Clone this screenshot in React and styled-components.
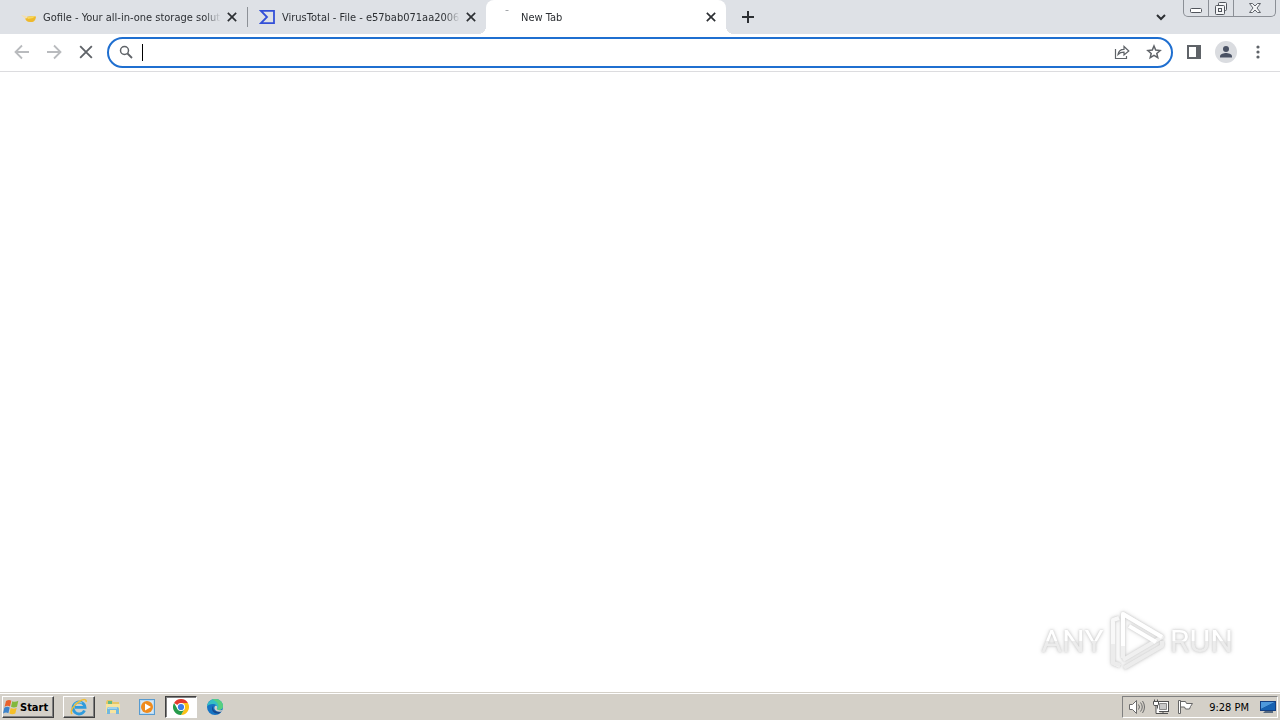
import React from 'react';
import styled, { createGlobalStyle, css } from 'styled-components';

const GlobalStyle = createGlobalStyle`
  * {
    box-sizing: border-box;
  }

  body {
    margin: 0;
    background: #fff;
    font-family: 'DejaVu Sans Condensed', 'DejaVu Sans', Verdana, sans-serif;
    font-size: 11px;
  }

  button {
    margin: 0;
    padding: 0;
    border: none;
    background: none;
    color: inherit;
    font: inherit;
  }

  svg {
    display: block;
    flex: none;
  }
`;

const Desktop = styled.div`
  display: flex;
  flex-direction: column;
  min-height: 100vh;
`;

/* tab strip */

const TabStrip = styled.header`
  display: flex;
  height: 34px;
  padding: 0 4px 0 8px;
  background: #dee1e6;
  color: #2c2f33;
`;

const TabList = styled.div`
  display: flex;
  flex: 0 1 718px;
  min-width: 0;
`;

const Tab = styled.div`
  position: relative;
  display: flex;
  flex: 0 1 ${props => (props.$active ? '240px' : '239px')};
  align-items: center;
  min-width: 0;
  padding: 0 7px 0 12px;
  ${props => props.$divider && css`
    background: linear-gradient(#8d9197, #8d9197) left center / 1px 20px no-repeat;
  `}
  ${props => props.$active && css`
    border-radius: 8px 8px 0 0;
    background: #fff;

    &::before,
    &::after {
      content: '';
      position: absolute;
      bottom: 0;
      width: 8px;
      height: 8px;
    }

    &::before {
      right: 100%;
      background: radial-gradient(circle at 0 0, transparent 8px, #fff 8px);
    }

    &::after {
      left: 100%;
      background: radial-gradient(circle at 100% 0, transparent 8px, #fff 8px);
    }
  `}
`;

const TabTitle = styled.button`
  display: flex;
  flex: 1;
  align-items: center;
  gap: 7px;
  min-width: 0;
  height: 100%;
`;

const TabText = styled.span`
  flex: 1;
  overflow: hidden;
  padding-top: 2px;
  line-height: 16px;
  text-align: left;
  white-space: nowrap;
  mask-image: linear-gradient(to left, transparent, #000 16px);
`;

const TabClose = styled.button`
  display: flex;
  align-items: center;
  justify-content: center;
  width: 16px;
  height: 16px;
  margin-left: 3px;
`;

const StripButton = styled.button`
  display: flex;
  align-items: center;
  justify-content: center;
  width: 28px;
  height: 34px;
  margin-left: ${props => (props.$end ? 'auto' : '8px')};
`;

const WindowControls = styled.div`
  display: flex;
  height: 17px;
  margin-left: 8px;
  border: 1px solid #8b8f96;
  border-top: none;
  border-radius: 0 0 5px 5px;
`;

const WindowButton = styled.button`
  display: flex;
  align-items: center;
  justify-content: center;
  width: ${props => (props.$wide ? '42px' : '25px')};

  &:first-child {
    width: 24px;
  }

  & + & {
    border-left: 1px solid #8b8f96;
  }
`;

/* toolbar */

const Toolbar = styled.nav`
  display: flex;
  align-items: center;
  height: 38px;
  padding: 0 6px;
  border-bottom: 1px solid #dcdcdf;
  background: #fff;
`;

const ToolButton = styled.button`
  display: flex;
  align-items: center;
  justify-content: center;
  width: 32px;
  height: 27px;
  padding-bottom: 1px;
  color: ${props => (props.disabled ? '#b9bbbe' : '#5f6368')};
`;

const Omnibox = styled.div`
  display: flex;
  flex: 1;
  align-items: center;
  height: 31px;
  margin: 0 5px;
  padding: 0 1px 0 8px;
  border: 2px solid #1f6fd0;
  border-radius: 16px;
`;

const SearchBadge = styled.span`
  padding-bottom: 1px;
`;

const Address = styled.input`
  flex: 1;
  min-width: 0;
  height: 17px;
  margin-left: 7px;
  padding: 0;
  border: none;
  border-left: 1px solid #000;
  outline: none;
  background: none;
  font: inherit;
`;

/* page */

const Page = styled.main`
  display: flex;
  flex: 1;
  align-items: flex-end;
  justify-content: flex-end;
  padding: 0 47px 20px;
  background: #fff;
`;

const Watermark = styled.div`
  display: flex;
  align-items: center;
  gap: 5px;
  filter: drop-shadow(0 0 1px #c8c8c8) drop-shadow(0 0 2px #e0e0e0);
`;

const WatermarkText = styled.span`
  background: linear-gradient(#fff 50%, #ececec 50%);
  background-clip: text;
  color: transparent;
  font-family: Roboto, 'Liberation Sans', sans-serif;
  font-size: 32px;
  line-height: 48px;
`;

/* taskbar */

const Taskbar = styled.footer`
  display: flex;
  align-items: center;
  height: 28px;
  padding: 2px 2px 1px;
  border-top: 1px solid #d4d0c8;
  background: #d4d0c8;
  box-shadow: inset 0 1px #fff;
  color: #000;
`;

const raised = css`
  border: 1px solid;
  border-color: #fff #404040 #404040 #fff;
  box-shadow: inset -1px -1px #808080;
`;

const StartButton = styled.button`
  ${raised}
  display: flex;
  align-items: center;
  gap: 1px;
  width: 52px;
  height: 22px;
  margin-right: 9px;
  font-size: 11px;
  font-weight: bold;
`;

const TaskButton = styled.button`
  display: flex;
  align-items: center;
  justify-content: center;
  width: 32px;
  height: 22px;
  margin-right: 2px;
  ${props => props.$raised && raised}
  ${props => props.$pressed && css`
    border: 1px solid;
    border-color: #404040 #fff #fff #404040;
    background: #fff;
    box-shadow: inset 1px 1px #808080;
  `}
`;

const Tray = styled.div`
  display: flex;
  align-items: center;
  height: 22px;
  margin-left: auto;
  padding: 0 1px 0 2px;
  border: 1px solid;
  border-color: #808080 #fff #fff #808080;
`;

const TrayButton = styled.button`
  display: flex;
  align-items: center;
  justify-content: center;
  width: ${props => (props.$narrow ? '16px' : '24px')};
  height: 20px;
`;

const Clock = styled.time`
  margin: 0 11px 0 12px;
  padding-top: 2px;
  line-height: 16px;
  white-space: nowrap;
`;

const Cross = ({ size, weight }) => (
  <svg width={size} height={size} viewBox="0 0 12 12" stroke="currentColor" strokeWidth={weight}>
    <path d="M1 1l10 10M11 1L1 11" />
  </svg>
);

const GofileIcon = () => (
  <svg width="16" height="16" viewBox="0 0 16 16">
    <path d="M5 8.500c2-1 8-1.500 11-1-.3 3.500-1.500 5.500-5 5.500-4 .3-5.500-1.500-6-4.500z" fill="#eeb92c" />
    <path d="M1 6l5 1 2 2-3 .5z" fill="#f3dfb0" />
    <path d="M7 8l8-1-2 2-5 1z" fill="#f8d85c" />
  </svg>
);

const VirusTotalIcon = () => (
  <svg width="16" height="16" viewBox="0 0 16 16" fill="none" stroke="#3350d8" strokeWidth="1.800">
    <path d="M2 1.900h13v12.200H2L8 8z" />
  </svg>
);

const LoadingIcon = () => (
  <svg width="16" height="16" viewBox="0 0 16 16">
    <path d="M7.500 1.500h3" fill="none" stroke="#a3a6aa" />
  </svg>
);

const tabs = [
  { title: 'Gofile - Your all-in-one storage soluti', icon: <GofileIcon /> },
  { title: 'VirusTotal - File - e57bab071aa20065', icon: <VirusTotalIcon />, divider: true },
  { title: 'New Tab', icon: <LoadingIcon />, active: true },
];

const ArrowIcon = ({ forward }) => (
  <svg width="16" height="16" viewBox="0 0 16 16" fill="none" stroke="currentColor" strokeWidth="1.800">
    <path d={forward ? 'M1 8h13M8 1.500L14.500 8 8 14.500' : 'M15 8H2M8 1.500L1.500 8 8 14.500'} />
  </svg>
);

const SearchIcon = () => (
  <svg width="18" height="18" viewBox="0 0 18 18" fill="none" stroke="#5f6368" strokeWidth="1.500">
    <circle cx="7.500" cy="7.500" r="4" />
    <path d="M10.500 10.500l4.500 4.500" strokeWidth="1.800" />
  </svg>
);

const ShareIcon = () => (
  <svg width="16" height="16" viewBox="0 0 16 16" fill="none" stroke="currentColor" strokeWidth="1.200">
    <path d="M1.500 5v9.500h11V12" />
    <path d="M4 10.500C4.500 7 6.500 5.300 10 5.300V2.500L14.800 7 10 11V8.200C7.300 8.200 5.500 9 4 10.500z" />
  </svg>
);

const StarIcon = () => (
  <svg width="16" height="16" viewBox="0 0 16 16" fill="none" stroke="currentColor" strokeWidth="1.500">
    <path d="M8 2l1.700 4.100 4.400.4-3.300 2.900 1 4.300L8 11.400l-3.800 2.300 1-4.300L1.900 6.500l4.400-.4z" />
  </svg>
);

const SidePanelIcon = () => (
  <svg width="14" height="14" viewBox="0 0 14 14" fill="currentColor">
    <path d="M0 0h14v14H0zM2 2v10h7V2z" fillRule="evenodd" />
  </svg>
);

const AvatarIcon = () => (
  <svg width="22" height="22" viewBox="0 0 22 22">
    <circle cx="11" cy="11" r="11" fill="#dadce0" />
    <circle cx="11" cy="8" r="3" fill="#4a5264" />
    <path d="M5 16.500v-1.200c0-2.200 4-3.300 6-3.300s6 1.100 6 3.300v1.200z" fill="#4a5264" />
  </svg>
);

const MenuIcon = () => (
  <svg width="4" height="14" viewBox="0 0 4 14" fill="currentColor">
    <circle cx="2" cy="2" r="1.600" />
    <circle cx="2" cy="7" r="1.600" />
    <circle cx="2" cy="12" r="1.600" />
  </svg>
);

const MinimizeIcon = () => (
  <svg width="14" height="14" viewBox="0 0 14 14" fill="#fff" stroke="#51555c">
    <rect x="1.500" y="7.500" width="11" height="4" rx="1" />
  </svg>
);

const RestoreIcon = () => (
  <svg width="14" height="14" viewBox="0 0 14 14" fill="#f4f5f7" stroke="#51555c">
    <rect x="4.500" y="1.500" width="8" height="8" rx="1" />
    <rect x="1.500" y="4.500" width="9" height="9" rx="1" />
    <rect x="4.500" y="7.500" width="3" height="3" />
  </svg>
);

const WindowCloseIcon = () => (
  <svg width="14" height="14" viewBox="0 0 14 14" fill="#f4f5f7" stroke="#60646b">
    <path d="M1.500 2.500h3L7 5l2.500-2.500h3L9 7l3.500 4.500h-3L7 9l-2.500 2.500h-3L5 7z" />
  </svg>
);

const PlayLogo = () => (
  <svg width="56" height="62" viewBox="0 0 56 62" fill="none" strokeWidth="4" strokeLinejoin="round">
    <path d="M10 8L4 10v43l7 3" stroke="#f8f8f8" />
    <path d="M4 34v19l7 2M15 58l38-22v-5" stroke="#ececec" />
    <path d="M14 48V4l39 23-39 23" stroke="#f0f0f0" />
    <path d="M14 36V4l39 23M20 16l27 16" stroke="#fff" />
  </svg>
);

const WindowsIcon = () => (
  <svg width="16" height="16" viewBox="0 0 16 16">
    <path d="M3 2Q6 0 8.300 1.700L7 7.400Q4.500 6 1.600 7.700z" fill="#e9622c" />
    <path d="M9.300 2.200Q12 3.500 15.300 1.800L14 7.700Q11 9.300 8 7.800z" fill="#82b83c" />
    <path d="M1.300 8.800Q4 7 6.700 8.500L5.400 14.200Q3 12.700 0 14.400z" fill="#3d83ca" />
    <path d="M7.700 8.900Q10.500 10.500 13.700 8.800L12.300 14.500Q9.500 16 6.400 14.600z" fill="#f5bf27" />
  </svg>
);

const ExplorerIcon = () => (
  <svg width="18" height="18" viewBox="0 0 18 18" fill="none">
    <path d="M14.500 12.500A6 6 0 1 1 15 9.300H5" stroke="#2f9bdc" strokeWidth="2.800" />
    <path d="M4 7.500A5.500 5.500 0 0 1 12 5" stroke="#79cbf2" strokeWidth="1.200" />
    <path d="M2 16C-.5 13 4 6.500 10 3c3.500-2 7-2 6 1" stroke="#efbd35" strokeWidth="1.500" />
  </svg>
);

const FolderIcon = () => (
  <svg width="18" height="18" viewBox="0 0 18 18">
    <path d="M3 2h5l1 2h6v11H2V4z" fill="#e6c666" />
    <path d="M4 3h4v3H4z" fill="#63b985" />
    <path d="M2 6h14v9H2z" fill="#f7e49d" />
    <path d="M3 16v-5q0-2 2-2h8q2 0 2 2v5h-3v-4H6v4z" fill="#72b8df" />
    <path d="M4 11q0-1 1-1h8" fill="none" stroke="#c9ebfa" />
  </svg>
);

const MediaIcon = () => (
  <svg width="18" height="18" viewBox="0 0 18 18">
    <rect x="1.500" y="1.500" width="15" height="15" fill="#b9daf3" stroke="#579bd0" />
    <rect x="3" y="3" width="12" height="12" fill="#d6e8f5" />
    <circle cx="9" cy="9" r="6" fill="#ef8b1d" />
    <path d="M7 5.500v7L13 9z" fill="#fff" />
  </svg>
);

const ChromeIcon = () => (
  <svg width="16" height="16" viewBox="0 0 16 16">
    <path d="M8 8L1.070 4A8 8 0 0 1 14.930 4H8z" fill="#e33b2e" />
    <path d="M8 8V4h6.930A8 8 0 0 1 8 16l3.500-6z" fill="#fbc116" />
    <path d="M8 8l3.500 2L8 16A8 8 0 0 1 1.070 4L4.500 10z" fill="#269b4b" />
    <circle cx="8" cy="8" r="4" fill="#fff" />
    <circle cx="8" cy="8" r="3.100" fill="#3b7de9" />
  </svg>
);

const EdgeIcon = () => (
  <svg width="16" height="16" viewBox="0 0 16 16">
    <circle cx="8" cy="8" r="8" fill="#1674c4" />
    <path d="M0 7.500C.5 3 4 0 8.200 0 13 0 16 3.500 16 7c0 2.500-2 4-4.500 4-2 0-2.700-1-2-2 .8-1.500-.2-4-3.500-4C3 5 .8 6.200 0 7.500z" fill="#35bfc4" />
    <path d="M8 0c5 0 8 3.500 8 7 0 2.500-2 4-4.500 4-1 0-1.700-.3-2-.8C13 9 12 3 5 .6z" fill="#57cf80" />
    <path d="M6.500 6.500C4.500 10 8 14 14.500 12.200c-.6.900-1.400 1.800-2.500 2.500C6 15 3 10 6.500 6.500z" fill="#17498e" />
    <path d="M8 7c1.500-.5 2.600.5 2 2-.7 1.500.5 2.700 5.500 2l-1 1.500C9 13.500 6 10 8 7z" fill="#d4d0c8" />
  </svg>
);

const SpeakerIcon = () => (
  <svg width="18" height="16" viewBox="0 0 18 16" fill="none" stroke="#6b6b6b">
    <path d="M1.500 5.500h3l4-4v13l-4-4h-3z" fill="#fff" />
    <path d="M10.500 5.500q2 2.500 0 5M12.500 3.500q3.500 4.500 0 9M14.500 2q4 6 0 12" />
  </svg>
);

const NetworkIcon = () => (
  <svg width="16" height="16" viewBox="0 0 16 16" fill="#fff" stroke="#505050">
    <rect x="4.500" y="2.500" width="11" height="10" />
    <path d="M6.500 4.500h7v6h-7z" fill="#c8c8c8" stroke="#888" />
    <path d="M6 14.500h9M10 12.500v2" />
    <path d="M1.500.500v2M4.500.500v2M.500 2.500h5v3q0 1-1.500 1H2Q.5 6.500.5 5.500zM3 6.500v8h4" />
  </svg>
);

const FlagIcon = () => (
  <svg width="16" height="16" viewBox="0 0 16 16" fill="#fff" stroke="#666">
    <path d="M3.500 2.500h5l1 2h6l-2 3-1 2.500h-4l-1-2h-4z" />
    <path d="M1.500 1.500h2v13h-2z" />
  </svg>
);

const DesktopIcon = () => (
  <svg width="16" height="14" viewBox="0 0 16 14">
    <rect x="0" y="1" width="16" height="10" fill="#143f82" />
    <path d="M1 2h14L1 9z" fill="#4e99dc" />
    <path d="M1 9l14-7v8H1z" fill="#1762b2" />
    <path d="M5 11h8v2H3z" fill="#56697f" />
  </svg>
);

const App = () => (
  <Desktop>
    <GlobalStyle />
    <TabStrip>
      <TabList>
        {tabs.map(tab => (
          <Tab key={tab.title} $active={tab.active} $divider={tab.divider}>
            <TabTitle>
              {tab.icon}
              <TabText>{tab.title}</TabText>
            </TabTitle>
            <TabClose aria-label="Close tab"><Cross size={10} weight={2} /></TabClose>
          </Tab>
        ))}
      </TabList>
      <StripButton aria-label="New tab">
        <svg width="12" height="12" viewBox="0 0 12 12" stroke="currentColor" strokeWidth="2">
          <path d="M6 0v12M0 6h12" />
        </svg>
      </StripButton>
      <StripButton $end aria-label="Search tabs">
        <svg width="10" height="7" viewBox="0 0 10 7" fill="none" stroke="currentColor" strokeWidth="2">
          <path d="M1 1l4 4 4-4" />
        </svg>
      </StripButton>
      <WindowControls>
        <WindowButton aria-label="Minimize"><MinimizeIcon /></WindowButton>
        <WindowButton aria-label="Restore"><RestoreIcon /></WindowButton>
        <WindowButton $wide aria-label="Close"><WindowCloseIcon /></WindowButton>
      </WindowControls>
    </TabStrip>

    <Toolbar>
      <ToolButton disabled aria-label="Back"><ArrowIcon /></ToolButton>
      <ToolButton disabled aria-label="Forward"><ArrowIcon forward /></ToolButton>
      <ToolButton aria-label="Stop loading"><Cross size={14} weight={1.6} /></ToolButton>
      <Omnibox>
        <SearchBadge><SearchIcon /></SearchBadge>
        <Address type="text" aria-label="Address and search bar" />
        <ToolButton aria-label="Share"><ShareIcon /></ToolButton>
        <ToolButton aria-label="Bookmark this tab"><StarIcon /></ToolButton>
      </Omnibox>
      <ToolButton aria-label="Side panel"><SidePanelIcon /></ToolButton>
      <ToolButton aria-label="Profile"><AvatarIcon /></ToolButton>
      <ToolButton aria-label="Menu"><MenuIcon /></ToolButton>
    </Toolbar>

    <Page>
      <Watermark>
        <WatermarkText>ANY</WatermarkText>
        <PlayLogo />
        <WatermarkText>RUN</WatermarkText>
      </Watermark>
    </Page>

    <Taskbar>
      <StartButton><WindowsIcon />Start</StartButton>
      <TaskButton $raised aria-label="Internet Explorer"><ExplorerIcon /></TaskButton>
      <TaskButton aria-label="File Explorer"><FolderIcon /></TaskButton>
      <TaskButton aria-label="Media Player"><MediaIcon /></TaskButton>
      <TaskButton $pressed aria-label="Chrome"><ChromeIcon /></TaskButton>
      <TaskButton aria-label="Edge"><EdgeIcon /></TaskButton>
      <Tray>
        <TrayButton aria-label="Volume"><SpeakerIcon /></TrayButton>
        <TrayButton aria-label="Network"><NetworkIcon /></TrayButton>
        <TrayButton aria-label="Action center"><FlagIcon /></TrayButton>
        <Clock>9:28 PM</Clock>
        <TrayButton $narrow aria-label="Show desktop"><DesktopIcon /></TrayButton>
      </Tray>
    </Taskbar>
  </Desktop>
);

export default App;
